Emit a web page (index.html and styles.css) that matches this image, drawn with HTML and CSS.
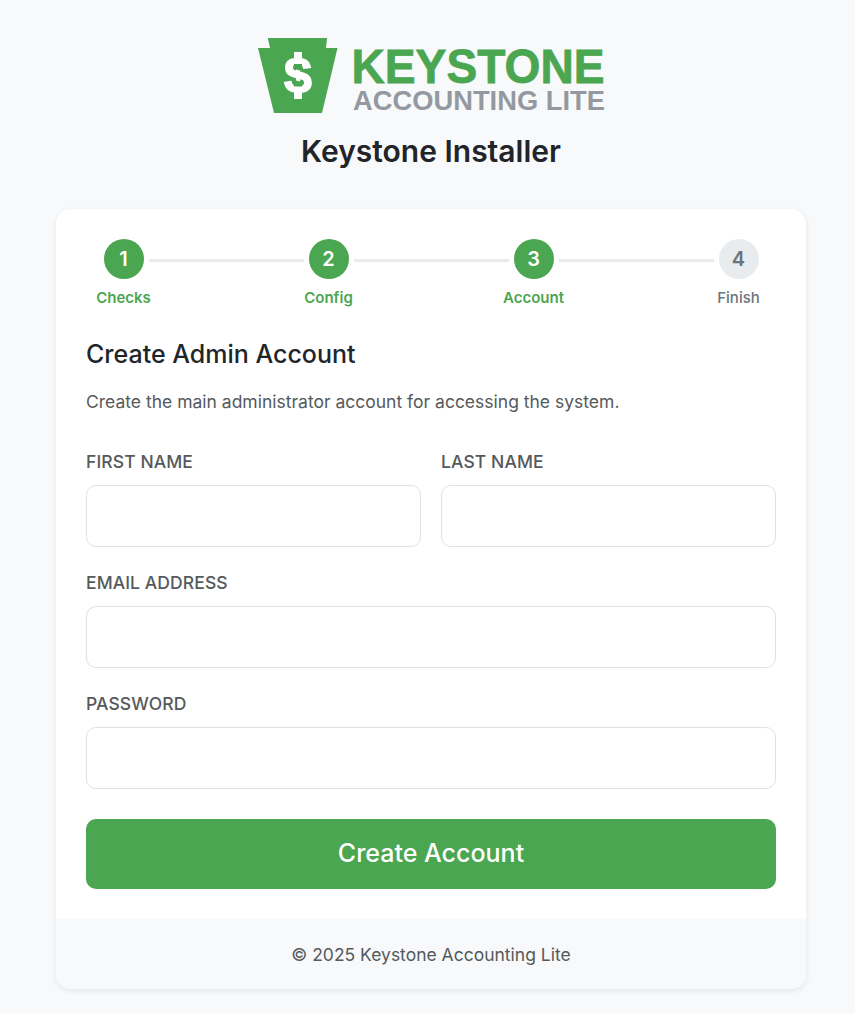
FILE: index.html
```html
<!DOCTYPE html>
<html lang="en">

<head>
    <meta charset="UTF-8">
    <meta name="viewport" content="width=device-width, initial-scale=1.0">
    <title>Keystone Installer</title>
    <link rel="stylesheet" href="styles.css">
</head>

<body>

    <main class="installer">
        <header class="header">
            <svg class="logo" width="350" height="80" viewBox="0 0 350 80" role="img" aria-label="Keystone Accounting Lite">
                <path class="logo-mark" d="M11.8 3H71l-1 10h11.5L66 78H18L2 13h12z" />
                <text class="logo-dollar" x="42" y="57" text-anchor="middle">$</text>
                <path class="logo-bar" d="M38 17h8v6h-8zM38 57h8v7h-8z" />
                <path class="logo-mark" d="M38 29h8v7l-8-2zM38 45l8 2v4.5h-8z" />
                <text class="logo-name" x="95.5" y="47.7" textLength="253" lengthAdjust="spacingAndGlyphs">KEYSTONE</text>
                <text class="logo-sub" x="97" y="75" textLength="252" lengthAdjust="spacingAndGlyphs">ACCOUNTING LITE</text>
            </svg>
            <h1>Keystone Installer</h1>
        </header>

        <div class="card">
            <div class="card-body">
                <div class="steps">
                    <div class="step active">
                        <div class="circle">1</div>
                        <span>Checks</span>
                    </div>
                    <div class="line"></div>
                    <div class="step active">
                        <div class="circle">2</div>
                        <span>Config</span>
                    </div>
                    <div class="line"></div>
                    <div class="step active">
                        <div class="circle">3</div>
                        <span>Account</span>
                    </div>
                    <div class="line"></div>
                    <div class="step">
                        <div class="circle">4</div>
                        <span>Finish</span>
                    </div>
                </div>

                <h2>Create Admin Account</h2>
                <p class="intro">Create the main administrator account for accessing the system.</p>

                <form>
                    <div class="row">
                        <div class="field">
                            <label for="first_name">First Name</label>
                            <input type="text" id="first_name" name="first_name">
                        </div>
                        <div class="field">
                            <label for="last_name">Last Name</label>
                            <input type="text" id="last_name" name="last_name">
                        </div>
                    </div>
                    <div class="field">
                        <label for="email">Email Address</label>
                        <input type="email" id="email" name="email">
                    </div>
                    <div class="field">
                        <label for="password">Password</label>
                        <input type="password" id="password" name="password">
                    </div>
                    <button type="submit">Create Account</button>
                </form>
            </div>
            <footer class="card-footer">&copy; 2025 Keystone Accounting Lite</footer>
        </div>
    </main>

</body>

</html>
```
FILE: styles.css
```css
* {
    box-sizing: border-box;
}

body {
    font-family: Inter, "Liberation Sans", sans-serif;
    font-size: 17.5px;
    background-color: #f8f9fb;
    color: #212529;
    margin: 0;
}

.installer {
    padding: 35px 49px 24px 56px;
}

.header {
    text-align: center;
}

.logo {
    display: block;
    margin: 0 auto;
    overflow: visible;
}

.logo text {
    font-family: "Liberation Sans", Arial, sans-serif;
    font-weight: bold;
}

.logo-mark,
.logo-name {
    fill: #4ba651;
}

.logo-name {
    font-size: 48.5px;
    stroke: #4ba651;
    stroke-width: 0.8px;
}

.logo-dollar {
    fill: #fff;
    font-size: 50px;
    stroke: #fff;
    stroke-width: 1.5px;
}

.logo-bar {
    fill: #fff;
}

.logo-sub {
    fill: #9499a1;
    font-size: 27px;
}

h1 {
    font-size: 30px;
    font-weight: 600;
    line-height: 36px;
    margin: 18px 0 40px;
}

.card {
    background-color: #fff;
    border-radius: 15px;
    box-shadow: 0 2px 6px rgba(0, 0, 0, 0.08);
    overflow: hidden;
}

.card-body {
    padding: 30px;
}

.steps {
    display: flex;
    align-items: flex-start;
}

.step {
    display: flex;
    flex-direction: column;
    align-items: center;
    width: 75px;
    font-size: 15px;
    font-weight: 500;
    line-height: 22px;
    color: #6c757d;
}

.circle {
    width: 40px;
    height: 40px;
    border-radius: 50%;
    background-color: #e9ecef;
    font-size: 20px;
    font-weight: 600;
    line-height: 40px;
    text-align: center;
    margin-bottom: 8px;
}

.active {
    color: #4ba651;
    font-weight: 600;
}

.active .circle {
    background-color: #4ba651;
    color: #fff;
}

.line {
    flex: 1;
    height: 3px;
    margin: 20px -12.5px 0;
    background-color: #e9ecef;
}

h2 {
    font-size: 25px;
    font-weight: 500;
    line-height: 30px;
    margin: 30px 0 20px;
}

.intro {
    line-height: 26px;
    margin: 0 0 34px;
    color: #55595c;
}

.row {
    display: grid;
    grid-template-columns: 1fr 1fr;
    gap: 20px;
}

.field {
    margin-bottom: 23px;
}

label {
    display: block;
    font-weight: 500;
    line-height: 26px;
    text-transform: uppercase;
    letter-spacing: 0.1px;
    color: #55595c;
    margin-bottom: 10px;
}

input {
    display: block;
    width: 100%;
    height: 62px;
    padding: 15px;
    font: inherit;
    background-color: #fff;
    border: 1px solid #dee2e6;
    border-radius: 10px;
}

button {
    display: block;
    width: 100%;
    height: 70px;
    margin-top: 30px;
    padding: 0 0 2px;
    font: inherit;
    font-size: 25px;
    font-weight: 500;
    color: #fff;
    background-color: #4ba651;
    border: 0;
    border-radius: 10px;
    cursor: pointer;
}

.card-footer {
    height: 70px;
    line-height: 72px;
    text-align: center;
    color: #55595c;
    background-color: #f8f9fb;
}
```
